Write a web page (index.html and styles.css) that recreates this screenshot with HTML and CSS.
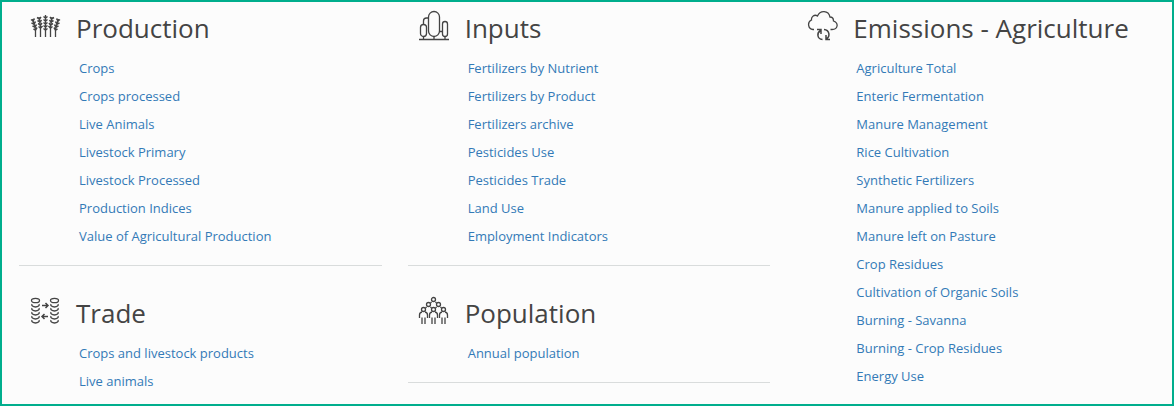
FILE: index.html
```html
<!DOCTYPE html>
<html lang="en">

<head>
    <meta charset="utf-8">
    <meta name="viewport" content="width=device-width, initial-scale=1">
    <title>Data domains</title>
    <link rel="stylesheet" href="styles.css">
</head>

<body>
    <main class="domains">
        <div class="column">
            <section class="group">
                <h2>
                    <svg class="icon" viewBox="0 0 32 32" aria-hidden="true">
                        <path d="M6.500 27V19L3.500 9M11.500 27V17L10 7M16.500 27V5M21.500 27V17L23 7M26.500 27V19L29.500 9" />
                        <path class="thick" d="M2 9.500l2 1.500 1.500-2.500M2.500 13l2.500 1 1.500-2.500M3.500 16l2.500 1 1.500-2.500M4.500 19l2 1 1.500-2.500M8 7.500l2.500 1.500 1.500-2M8.500 10.500l2.500 1.500 1.500-2M9 13.500l2.500 1.500 1.500-2M9.500 16.500l2 1.500 2-2M14.500 6.500l2 1.500 2-1.500M14.500 9.500l2 1.500 2-1.500M14.500 12.500l2 1.500 2-1.500M14.500 15.500l2 1.500 2-1.500M14.500 18.500l2 1.500 2-1.500M25 7.500L22.500 9 21 7M24.500 10.500L22 12l-1.500-2M24 13.500L21.500 15 20 13M23.500 16.500l-2 1.500-2-2M31 9.500L29 11l-1.500-2.500M30.500 13L28 14l-1.500-2.500M29.500 16L27 17l-1.500-2.500M28.500 19l-2 1-1.500-2.500" />
                    </svg>
                    Production
                </h2>
                <ul>
                    <li><a href="#">Crops</a></li>
                    <li><a href="#">Crops processed</a></li>
                    <li><a href="#">Live Animals</a></li>
                    <li><a href="#">Livestock Primary</a></li>
                    <li><a href="#">Livestock Processed</a></li>
                    <li><a href="#">Production Indices</a></li>
                    <li><a href="#">Value of Agricultural Production</a></li>
                </ul>
            </section>
            <section class="group">
                <h2>
                    <svg class="icon" viewBox="0 0 32 32" aria-hidden="true">
                        <g id="coins">
                            <ellipse cx="6.500" cy="5.500" rx="4" ry="2.200" />
                            <path d="M3 9c-1 1.500 1 3 3.500 3S11 10.500 10 9M3 13c-1 1.500 1 3 3.500 3S11 14.500 10 13M3 17c-1 1.500 1 3 3.500 3S11 18.500 10 17M3 21c-1 1.500 1 3 3.500 3S11 22.500 10 21M3 25c-1 1.500 1 3 3.500 3S11 26.500 10 25" />
                        </g>
                        <use href="#coins" x="19" />
                        <path class="arrow" d="M13 10.500h6M16.500 8l2.500 2.500-2.500 2.500M19 21.500h-6M15.500 19L13 21.500l2.500 2.500" />
                    </svg>
                    Trade
                </h2>
                <ul>
                    <li><a href="#">Crops and livestock products</a></li>
                    <li><a href="#">Live animals</a></li>
                </ul>
            </section>
        </div>

        <div class="column">
            <section class="group">
                <h2>
                    <svg class="icon" viewBox="0 0 32 32" aria-hidden="true">
                        <rect x="10.500" y="1.500" width="11" height="25" rx="5.500" />
                        <rect x="2.500" y="14.500" width="6" height="12" rx="3" />
                        <rect x="24.500" y="11.500" width="5" height="15" rx="2.500" />
                        <path d="M5.500 14.500V11q0-3 3-3h2M21.500 21.500h3M5.500 26v3M16 26v3M27 26v3M1 29.500h30" />
                    </svg>
                    Inputs
                </h2>
                <ul>
                    <li><a href="#">Fertilizers by Nutrient</a></li>
                    <li><a href="#">Fertilizers by Product</a></li>
                    <li><a href="#">Fertilizers archive</a></li>
                    <li><a href="#">Pesticides Use</a></li>
                    <li><a href="#">Pesticides Trade</a></li>
                    <li><a href="#">Land Use</a></li>
                    <li><a href="#">Employment Indicators</a></li>
                </ul>
            </section>
            <section class="group">
                <h2>
                    <svg class="icon" viewBox="0 0 32 32" aria-hidden="true">
                        <circle cx="15.500" cy="4.500" r="2" />
                        <circle cx="10.500" cy="9.500" r="2" />
                        <circle cx="20.500" cy="9.500" r="2" />
                        <g id="person">
                            <circle cx="5.500" cy="14.500" r="2" />
                            <path d="M4 17Q1.500 17.500 1.500 20v3M7 17q2.500.5 2.500 3v3M4 22.500V29M7 22.500V29" />
                        </g>
                        <use href="#person" x="10" />
                        <use href="#person" x="20" />
                        <path d="M8.500 12l-1 1M12.500 12l1 1M18.500 12l-1 1M22.500 12l1 1M13.500 7l-1 1M17.500 7l1 1" />
                    </svg>
                    Population
                </h2>
                <ul>
                    <li><a href="#">Annual population</a></li>
                </ul>
            </section>
        </div>

        <div class="column">
            <section class="group">
                <h2>
                    <svg class="icon" viewBox="0 0 32 32" aria-hidden="true">
                        <path d="M8 19.500H7A5 5 0 0 1 5.500 10C5 6.500 8.500 4 11.500 6C14-0 22.500 0 24 7C27 7 27.500 9 27.500 11C33 13 32 19.500 26 19.500H24.500" />
                        <path class="arrow" d="M16.500 29.500C11 29 10.500 23 14.500 20.500M11 19.500h4v4.500M18 19.500c5.500.5 6.500 6.500 2.500 9.500M24 29.500h-4V25" />
                    </svg>
                    Emissions - Agriculture
                </h2>
                <ul>
                    <li><a href="#">Agriculture Total</a></li>
                    <li><a href="#">Enteric Fermentation</a></li>
                    <li><a href="#">Manure Management</a></li>
                    <li><a href="#">Rice Cultivation</a></li>
                    <li><a href="#">Synthetic Fertilizers</a></li>
                    <li><a href="#">Manure applied to Soils</a></li>
                    <li><a href="#">Manure left on Pasture</a></li>
                    <li><a href="#">Crop Residues</a></li>
                    <li><a href="#">Cultivation of Organic Soils</a></li>
                    <li><a href="#">Burning - Savanna</a></li>
                    <li><a href="#">Burning - Crop Residues</a></li>
                    <li><a href="#">Energy Use</a></li>
                </ul>
            </section>
        </div>
    </main>
</body>

</html>
```
FILE: styles.css
```css
* {
    box-sizing: border-box;
}

body {
    margin: 0;
    font-family: "Open Sans", sans-serif;
    font-size: 13px;
    color: #444;
    background-color: #fcfcfc;
}

.domains {
    display: grid;
    grid-template-columns: repeat(3, 1fr);
    gap: 26px;
    min-height: 100vh;
    padding: 6px 13px 6px 17px;
    border: 2px solid #00ae8d;
}

.group {
    padding-bottom: 15px;
    margin-bottom: 27px;
    border-bottom: 1px solid #d9dcdc;
}

.column .group:last-child {
    margin-bottom: 0;
}

/* the outer columns end without a divider */
.column:first-child .group:last-child,
.column:last-child .group:last-child {
    padding-bottom: 0;
    border-bottom: none;
}

.group h2 {
    display: flex;
    align-items: center;
    gap: 15px;
    height: 40px;
    margin: 0 0 6px;
    padding-left: 10px;
    font-size: 26px;
    font-weight: 400;
    white-space: nowrap;
}

.icon {
    flex: none;
    width: 32px;
    height: 32px;
    margin-bottom: 4px;
    fill: none;
    stroke: #444;
    stroke-width: 1.3;
}

.icon .thick,
.icon .arrow {
    stroke-width: 1.5;
}

.group ul {
    margin: 0;
    padding: 0 0 0 60px;
    list-style: none;
}

.group li {
    line-height: 28px;
}

.group a {
    color: #337ab7;
    text-decoration: none;
}

.group a:hover {
    text-decoration: underline;
}
```
